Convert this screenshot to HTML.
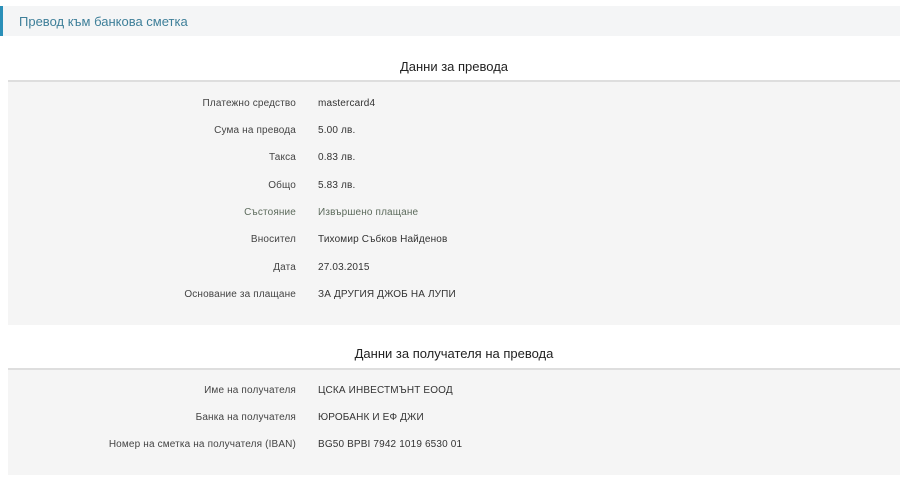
<!DOCTYPE html>
<html><head><meta charset="utf-8"><style>
body{margin:0;width:900px;height:477px;background:#fff;font-family:"Liberation Sans","DejaVu Sans",sans-serif;color:#333;overflow:hidden;position:relative}
.hdr{position:absolute;left:0;top:6px;width:900px;height:30px;background:#f4f5f6}
.hdr .bar{position:absolute;left:0;top:0;width:3px;height:30px;background:#2a8fb8}
.hdr span{position:absolute;left:19px;top:8px;font-size:13px;color:#3e7f99}
.title{position:absolute;left:8px;width:892px;text-align:center;font-size:13px;color:#222}
.box{position:absolute;left:8px;width:892px;background:#f5f5f5;border-top:2px solid #dedede}
.row{position:absolute;left:0;width:892px;font-size:10px;height:14px;line-height:14px;letter-spacing:0.15px}
.row .l{position:absolute;right:604px;text-align:right;white-space:nowrap;color:#444}
.row .v{position:absolute;left:310px;white-space:nowrap;color:#333}
.g .l,.g .v{color:#5c6b5c}
</style></head><body>
<div class="hdr"><div class="bar"></div><span>Превод към банкова сметка</span></div>
<div class="title" style="top:59px">Данни за превода</div>
<div class="box" style="top:80px;height:243px">
<div class="row" style="top:15px"><span class="l">Платежно средство</span><span class="v">mastercard4</span></div>
<div class="row" style="top:42px"><span class="l">Сума на превода</span><span class="v">5.00 лв.</span></div>
<div class="row" style="top:69px"><span class="l">Такса</span><span class="v">0.83 лв.</span></div>
<div class="row" style="top:97px"><span class="l">Общо</span><span class="v">5.83 лв.</span></div>
<div class="row g" style="top:124px"><span class="l">Състояние</span><span class="v">Извършено плащане</span></div>
<div class="row" style="top:151px"><span class="l">Вносител</span><span class="v">Тихомир Събков Найденов</span></div>
<div class="row" style="top:179px"><span class="l">Дата</span><span class="v">27.03.2015</span></div>
<div class="row" style="top:206px"><span class="l">Основание за плащане</span><span class="v">ЗА ДРУГИЯ ДЖОБ НА ЛУПИ</span></div>
</div>
<div class="title" style="top:346px">Данни за получателя на превода</div>
<div class="box" style="top:368px;height:105px">
<div class="row" style="top:14px"><span class="l">Име на получателя</span><span class="v">ЦСКА ИНВЕСТМЪНТ ЕООД</span></div>
<div class="row" style="top:41px"><span class="l">Банка на получателя</span><span class="v">ЮРОБАНК И ЕФ ДЖИ</span></div>
<div class="row" style="top:68px"><span class="l">Номер на сметка на получателя (IBAN)</span><span class="v">BG50 BPBI 7942 1019 6530 01</span></div>
</div>
</body></html>
